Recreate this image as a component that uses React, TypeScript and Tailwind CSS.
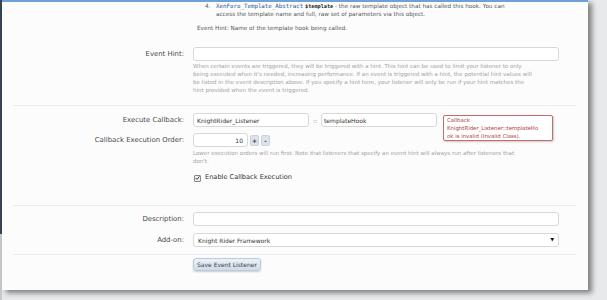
export default function App() {
  return (
    <div className="w-[607px] h-[300px] overflow-hidden bg-[#e8e9ea] flex font-['DejaVu_Sans',sans-serif]">
      {/* left edge of the page behind the overlay */}
      <div className="w-[2px] flex flex-col shrink-0">
        <div className="h-[234px] bg-[#35445a]" />
        <div className="flex-1 bg-[#c4c9ce]" />
      </div>

      <div className="w-[586px] h-[290px] shrink-0 bg-[#fcfcfd] border-t-2 border-[#6ea2d6] shadow-[4px_3px_5px_rgba(0,0,0,0.45)] pl-[11px] pr-[12px] flex flex-col">
        {/* hook parameters description */}
        <div className="pl-[180px] text-[5.7px] leading-[8px] text-[#555]">
          <div className="flex">
            <span className="w-[12px] shrink-0" />
            <span className="w-[11px] shrink-0">4.</span>
            <div className="whitespace-nowrap">
              <span className="font-['DejaVu_Sans_Mono',monospace] text-[5.8px] text-[#2a5a94]">XenForo_Template_Abstract</span>{" "}
              <span className="font-['DejaVu_Sans_Mono',monospace] text-[5.2px] font-bold text-[#222]">$template</span>
              {" "}- the raw template object that has called this hook. You can
              <br />
              access the template name and full, raw set of parameters via this object.
            </div>
          </div>
          <div className="mt-[6px] pl-[4px] whitespace-nowrap">Event Hint: Name of the template hook being called.</div>
        </div>

        {/* Event Hint */}
        <div className="mt-[15px] grid grid-cols-[171px_366px] gap-x-[9px]">
          <label className="h-[14px] flex items-center justify-end text-[6.9px] text-[#4a4a4a]">Event Hint:</label>
          <div>
            <div className="h-[14px] bg-white border border-[#d8d8d8] rounded-[3px]" />
            <p className="mt-[1px] text-[5.5px] leading-[8px] text-[#a3a3a3] whitespace-nowrap">
              When certain events are triggered, they will be triggered with a hint. This hint can be used to limit your listener to only
              <br />
              being executed when it's needed, increasing performance. If an event is triggered with a hint, the potential hint values will
              <br />
              be listed in the event description above. If you specify a hint here, your listener will only be run if your hint matches the
              <br />
              hint provided when the event is triggered.
            </p>
          </div>
        </div>

        <div className="mt-[11px] h-px bg-[#ececef]" />

        {/* Execute Callback */}
        <div className="mt-[7px] grid grid-cols-[171px_366px] gap-x-[9px]">
          <label className="h-[14px] flex items-center justify-end text-[6.9px] text-[#4a4a4a]">Execute Callback:</label>
          <div className="relative flex items-center">
            <div className="w-[116px] h-[14px] bg-white border border-[#d8d8d8] rounded-[3px] pl-[3px] flex items-center text-[6px] text-[#333]">KnightRider_Listener</div>
            <span className="w-[12px] text-center text-[6px] text-[#777]">::</span>
            <div className="w-[116px] h-[14px] bg-white border border-[#d8d8d8] rounded-[3px] pl-[2px] flex items-center text-[6px] text-[#333]">templateHook</div>
            <div className="absolute left-[250px] top-[2px] w-[110px] h-[26px] bg-white border border-[#c66a6a] rounded-[2px] shadow-[1px_1px_2px_rgba(0,0,0,0.2)] pl-[3px] pt-[1px] text-[5.4px] leading-[7.8px] text-[#b13a3a] whitespace-nowrap">
              Callback
              <br />
              KnightRider_Listener::templateHo
              <br />
              ok is invalid (Invalid Class).
            </div>
          </div>
        </div>

        {/* Callback Execution Order */}
        <div className="mt-[6px] grid grid-cols-[171px_366px] gap-x-[9px]">
          <label className="h-[14px] flex items-center justify-end text-[6.9px] text-[#4a4a4a]">Callback Execution Order:</label>
          <div>
            <div className="flex items-center gap-[2px]">
              <div className="w-[55px] h-[14px] bg-white border border-[#d8d8d8] rounded-[3px] pr-[4px] flex items-center justify-end text-[6px] text-[#333]">10</div>
              <span className="w-[9px] h-[11px] rounded-[2px] bg-[#dce3ec] border border-[#c9d3df] flex items-center justify-center text-[6px] font-bold text-[#333]">+</span>
              <span className="w-[9px] h-[11px] rounded-[2px] bg-[#dce3ec] border border-[#c9d3df] flex items-center justify-center text-[6px] font-bold text-[#333]">-</span>
            </div>
            <p className="mt-[2px] text-[5.5px] leading-[8px] text-[#a3a3a3] whitespace-nowrap">
              Lower execution orders will run first. Note that listeners that specify an event hint will always run after listeners that
              <br />
              don't.
            </p>
            <div className="mt-[8px] h-[10px] flex items-center gap-[4px] text-[6.6px] text-[#333]">
              <span className="w-[7px] h-[7px] ml-[1px] border border-[#888] rounded-[1px] bg-[#eee] flex items-center justify-center">
                <svg viewBox="0 0 10 10" className="w-[6px] h-[6px]">
                  <path d="M1.5 5.2 L4 7.8 L8.8 1.8" fill="none" stroke="#333" strokeWidth="1.8" />
                </svg>
              </span>
              Enable Callback Execution
            </div>
          </div>
        </div>

        <div className="mt-[22px] h-px bg-[#ececef]" />

        {/* Description */}
        <div className="mt-[6px] grid grid-cols-[171px_366px] gap-x-[9px]">
          <label className="h-[14px] flex items-center justify-end text-[6.9px] text-[#4a4a4a]">Description:</label>
          <div className="h-[14px] bg-white border border-[#d8d8d8] rounded-[3px]" />
        </div>

        {/* Add-on */}
        <div className="mt-[7px] grid grid-cols-[171px_366px] gap-x-[9px]">
          <label className="h-[14px] flex items-center justify-end text-[6.9px] text-[#4a4a4a]">Add-on:</label>
          <div className="h-[14px] bg-white border border-[#d8d8d8] rounded-[3px] pl-[4px] pr-[4px] flex items-center justify-between text-[6px] text-[#333]">
            <span>Knight Rider Framework</span>
            <span className="text-[4.5px] text-black">▼</span>
          </div>
        </div>

        <div className="mt-[7px] h-px bg-[#ececef]" />

        {/* submit */}
        <div className="mt-[3px] grid grid-cols-[171px_366px] gap-x-[9px]">
          <div />
          <div>
            <button className="h-[13px] px-[3px] rounded-[3px] border border-[#bccbdc] bg-gradient-to-b from-[#edf2f8] to-[#cfdbe9] shadow-[0_1px_2px_rgba(0,0,0,0.2)] text-[6px] text-[#3a3a3a] flex items-center">
              Save Event Listener
            </button>
          </div>
        </div>
      </div>
    </div>
  );
}
